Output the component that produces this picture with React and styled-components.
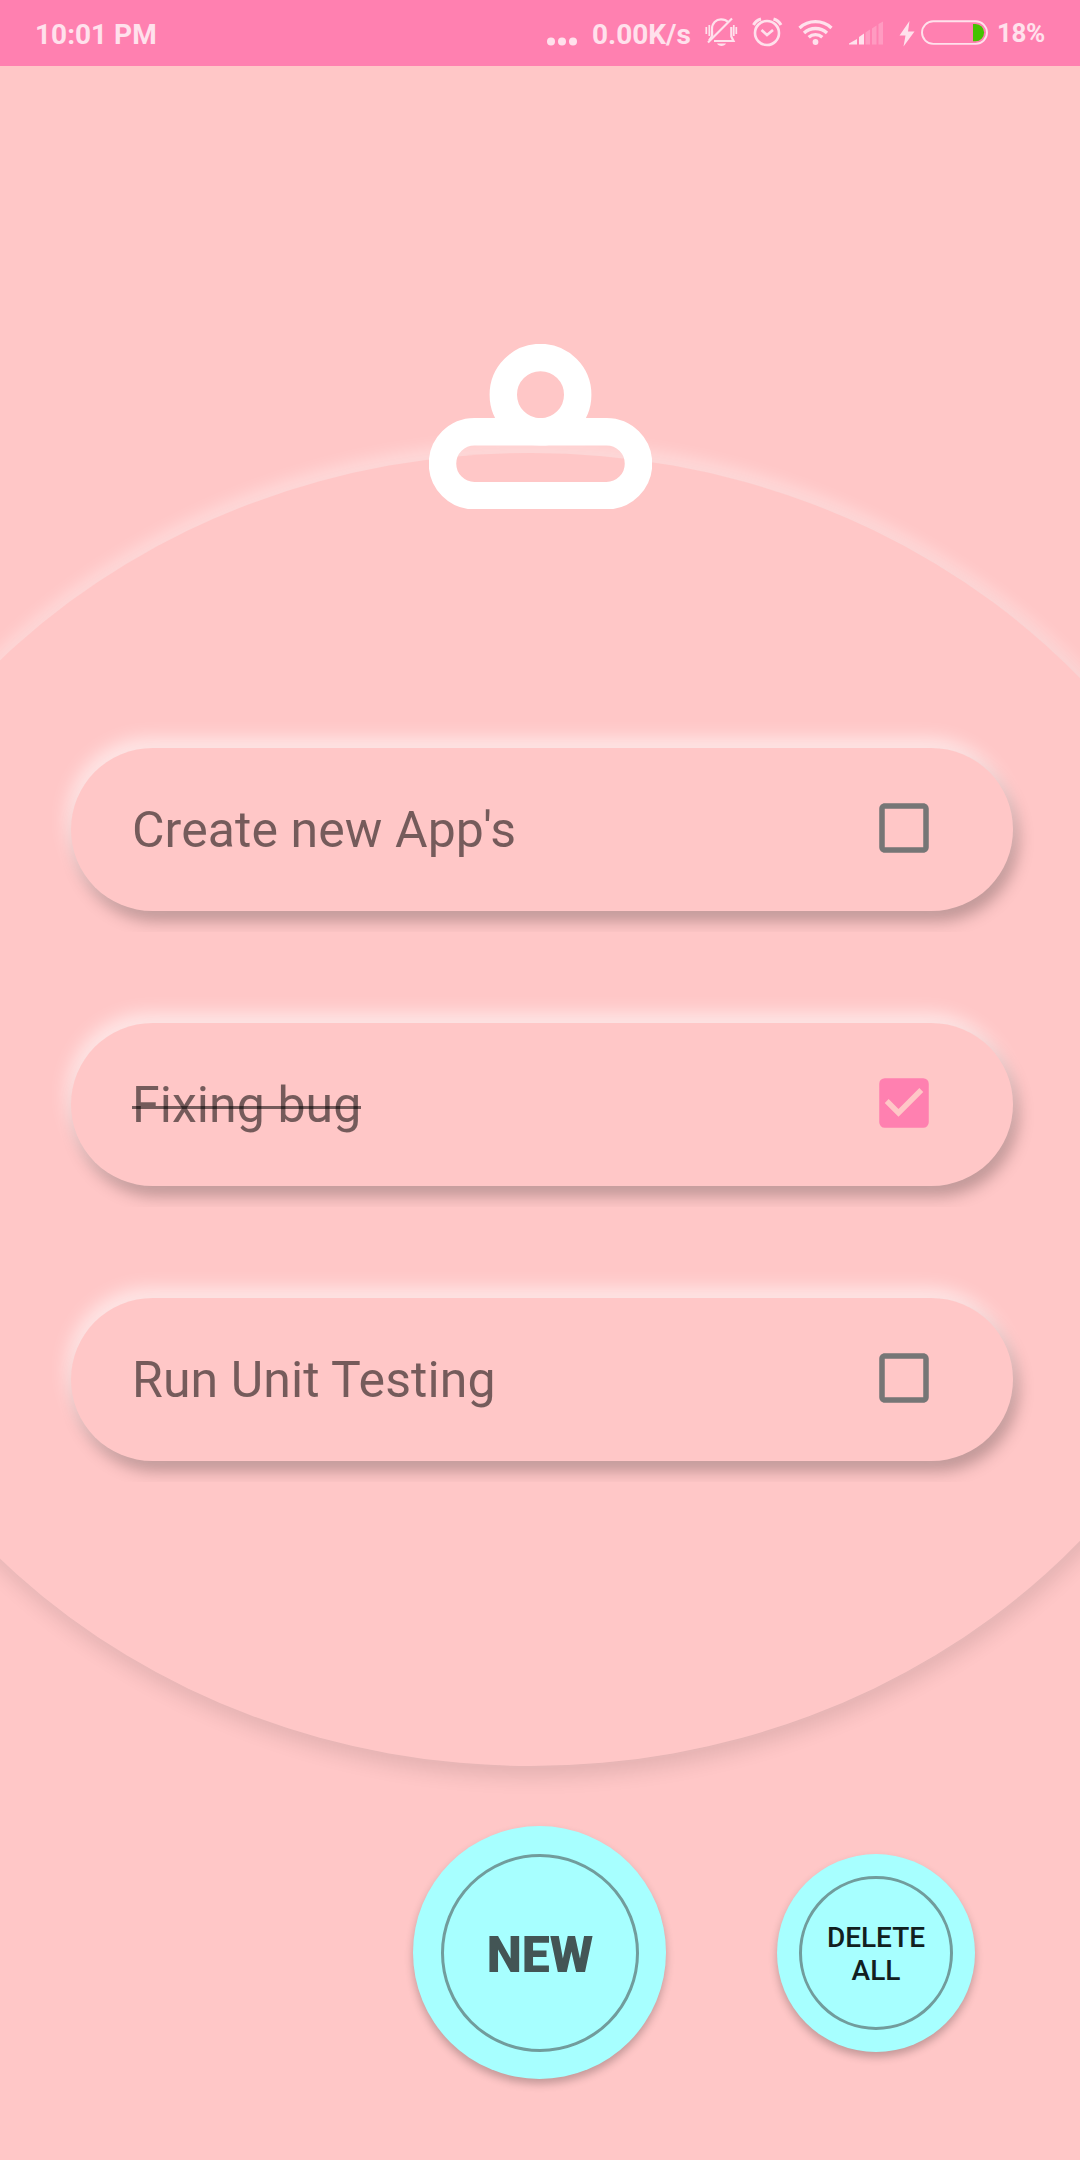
import React, { useState } from "react";
import styled, { createGlobalStyle } from "styled-components";
import { MdCheckBox, MdCheckBoxOutlineBlank } from "react-icons/md";

const GlobalStyle = createGlobalStyle`
  * { box-sizing: border-box; }
  body {
    margin: 0;
    background: #ffc7c7;
    font-family: Roboto, "Liberation Sans", sans-serif;
  }
`;

const Screen = styled.div`
  position: relative;
  display: flex;
  flex-direction: column;
  width: 1080px;
  height: 2160px;
  overflow: hidden;
  background: #ffc7c7;
`;

const StatusBar = styled.header`
  display: flex;
  align-items: center;
  justify-content: space-between;
  flex: none;
  height: 66px;
  padding: 0 35px 0 35px;
  background: #ff80b0;
  color: #ffe1ec;
`;

const StatusText = styled.span`
  flex: none;
  width: ${(p) => (p.$width ? `${p.$width}px` : "auto")};
  font-size: ${(p) => p.$size || 28}px;
  line-height: 34px;
  font-weight: 700;
  letter-spacing: ${(p) => p.$tracking || 0}px;
  white-space: nowrap;
  margin-top: ${(p) => p.$drop || 0}px;
`;

const StatusGroup = styled.div`
  display: flex;
  align-items: center;
  height: 66px;
`;

const StatusIcons = styled.svg`
  display: block;
  flex: none;
`;

const Backdrop = styled.div`
  position: absolute;
  left: -197px;
  top: 452.5px;
  width: 1456px;
  height: 1313px;
  border-radius: 50%;
  box-shadow: 0 -11px 16px rgba(255, 255, 255, 0.34), 3px 11px 20px rgba(0, 0, 0, 0.11);
  background: #ffc7c7;
`;

const Content = styled.main`
  position: relative;
  display: flex;
  flex-direction: column;
  flex: 1;
  padding-top: 278px;
`;

const Logo = styled.svg`
  display: block;
  flex: none;
  margin-left: 429px;
`;

const TaskList = styled.ul`
  display: flex;
  flex-direction: column;
  gap: 112px;
  margin: 239px 67px 0 71px;
  padding: 0;
  list-style: none;
`;

const TaskRow = styled.li`
  display: flex;
  align-items: center;
  justify-content: space-between;
  height: 163px;
  padding: 0 76px 0 61px;
  border-radius: 82px;
  background: #ffc7c7;
  box-shadow: -4px -10px 18px rgba(255, 255, 255, 0.58), 5px 10px 16px rgba(0, 0, 0, 0.26);
  clip-path: inset(-60px -60px -21px -60px);
`;

const TaskTitle = styled.span`
  position: relative;
  font-size: 50px;
  line-height: 60px;
  letter-spacing: 0.08px;
  color: rgba(0, 0, 0, 0.54);
  white-space: nowrap;

  &::after {
    content: "";
    display: ${(p) => (p.$done ? "block" : "none")};
    position: absolute;
    left: 0;
    right: 0;
    top: 31.5px;
    height: 3px;
    background: rgba(0, 0, 0, 0.54);
  }
`;

const CheckButton = styled.button`
  display: flex;
  padding: 0;
  border: 0;
  background: none;
  margin-top: -3px;
  color: ${(p) => (p.$done ? "#ff80b0" : "#767676")};
`;

const Actions = styled.footer`
  display: flex;
  align-items: center;
  gap: 111px;
  margin: 365px 0 0 413px;
`;

const RoundButton = styled.button`
  display: flex;
  align-items: center;
  justify-content: center;
  flex: none;
  width: ${(p) => p.$size}px;
  height: ${(p) => p.$size}px;
  padding: 0;
  border: 0;
  border-radius: 50%;
  background: #a7ffff;
  box-shadow: 0 5px 9px rgba(0, 0, 0, 0.24);
  font-family: inherit;
`;

const ButtonRing = styled.span`
  display: flex;
  align-items: center;
  justify-content: center;
  width: ${(p) => p.$size}px;
  height: ${(p) => p.$size}px;
  border: 3px solid #719c9c;
  border-radius: 50%;
  text-align: center;
  font-size: ${(p) => (p.$strong ? 50 : 28)}px;
  font-weight: ${(p) => (p.$strong ? 900 : 500)};
  line-height: ${(p) => (p.$strong ? 60 : 33)}px;
  color: ${(p) => (p.$strong ? "#435555" : "#112020")};
  padding-top: ${(p) => (p.$strong ? 5 : 2)}px;
  padding-left: ${(p) => (p.$strong ? 1 : 0)}px;
`;

const initialTasks = [
  { id: 1, title: "Create new App's", done: false },
  { id: 2, title: "Fixing bug", done: true },
  { id: 3, title: "Run Unit Testing", done: false },
];

function MoreDots() {
  return (
    <StatusIcons width="45" height="66" viewBox="547 0 45 66" fill="#ffe1ec">
      <circle cx="551" cy="41.5" r="4" />
      <circle cx="562" cy="41.5" r="4" />
      <circle cx="573" cy="41.5" r="4" />
    </StatusIcons>
  );
}

function SystemIcons() {
  return (
    <StatusIcons width="306" height="66" viewBox="691 0 306 66" fill="none" stroke="#ffe1ec" strokeWidth="2.2">
      {/* silenced bell */}
      <path d="M712 36 V29 C712 23 716 19.3 721 19.3 C724 19.3 726.5 20.3 728 22 M731.3 27 V36.5 L733.5 41 H714" />
      <path d="M708 42.5 L732 18.5" />
      <path d="M712 31 V36 L709 40.5" />
      <path d="M717 43.5 H726 C725.3 45 723.5 46 721.5 46 C719.5 46 717.7 45 717 43.5 Z" fill="#ffe1ec" stroke="none" />
      <path d="M706.3 27 V34 M709.3 25 V36 M733.8 25 V36 M736.3 27 V34" strokeWidth="1.7" />
      {/* alarm clock */}
      <circle cx="767" cy="33" r="12" strokeWidth="2.6" />
      <path d="M761.5 30 L767 35 L773 30" strokeWidth="2.6" />
      <path d="M753.5 25 C755 22 757.5 20 761 19 M781 25 C779.5 22 777 20 773.5 19" strokeWidth="3" />
      {/* wifi */}
      <circle cx="815.5" cy="42" r="2.9" fill="#ffe1ec" stroke="none" />
      <path d="M799.5 28 A23.5 23.5 0 0 1 831.5 28" strokeWidth="3.3" />
      <path d="M804 33 A17 17 0 0 1 827 33" strokeWidth="3.3" />
      <path d="M808.7 37.3 A10 10 0 0 1 822.3 37.3" strokeWidth="3.3" />
      {/* cell signal */}
      <g fill="#ffe1ec" stroke="none">
        <path d="M849 44.5 V43.5 L857 39 V44.5 Z" />
        <path d="M859 44.5 V37 L864 33.5 V44.5 Z" />
      </g>
      <g fill="#ff9bc1" stroke="none">
        <path d="M865.5 44.5 V32.5 L870 29.5 V44.5 Z" />
        <path d="M872 44.5 V28.5 L876.5 25.5 V44.5 Z" />
        <path d="M878.5 44.5 V24 L883 21.5 V44.5 Z" />
      </g>
      {/* charging bolt */}
      <path d="M909.5 21 L899.5 35.5 H905.5 L903.5 46.5 L914.5 31.5 H908 Z" fill="#ffe1ec" stroke="none" />
      {/* battery */}
      <rect x="922" y="21.3" width="65" height="22.6" rx="11.3" strokeWidth="1.9" />
      <path d="M973 24 H975.5 A8.6 8.6 0 0 1 975.5 41.2 H973 Z" fill="#44c200" stroke="none" />
    </StatusIcons>
  );
}

export default function App() {
  const [tasks, setTasks] = useState(initialTasks);
  const toggle = (id) =>
    setTasks((list) => list.map((t) => (t.id === id ? { ...t, done: !t.done } : t)));

  return (
    <Screen>
      <GlobalStyle />
      <Backdrop />
      <StatusBar>
        <StatusText $drop={3}>10:01 PM</StatusText>
        <StatusGroup>
          <MoreDots />
          <StatusText $drop={3} $width={99}>0.00K/s</StatusText>
          <SystemIcons />
          <StatusText $size={26} $width={48} $tracking={-0.4}>18%</StatusText>
        </StatusGroup>
      </StatusBar>
      <Content>
        <Logo width="223" height="165" viewBox="429 344 223 165" fill="none" stroke="#fff">
          <circle cx="540.5" cy="394.7" r="37.2" strokeWidth="27.4" />
          <rect x="442.5" y="431.7" width="196" height="64" rx="32" strokeWidth="27.5" />
        </Logo>
        <TaskList>
          {tasks.map((task) => (
            <TaskRow key={task.id}>
              <TaskTitle $done={task.done}>{task.title}</TaskTitle>
              <CheckButton $done={task.done} onClick={() => toggle(task.id)} aria-label={task.title}>
                {task.done ? <MdCheckBox size={66} /> : <MdCheckBoxOutlineBlank size={66} />}
              </CheckButton>
            </TaskRow>
          ))}
        </TaskList>
        <Actions>
          <RoundButton $size={253}>
            <ButtonRing $size={198} $strong>NEW</ButtonRing>
          </RoundButton>
          <RoundButton $size={198} onClick={() => setTasks([])}>
            <ButtonRing $size={154}>
              DELETE
              <br />
              ALL
            </ButtonRing>
          </RoundButton>
        </Actions>
      </Content>
    </Screen>
  );
}
